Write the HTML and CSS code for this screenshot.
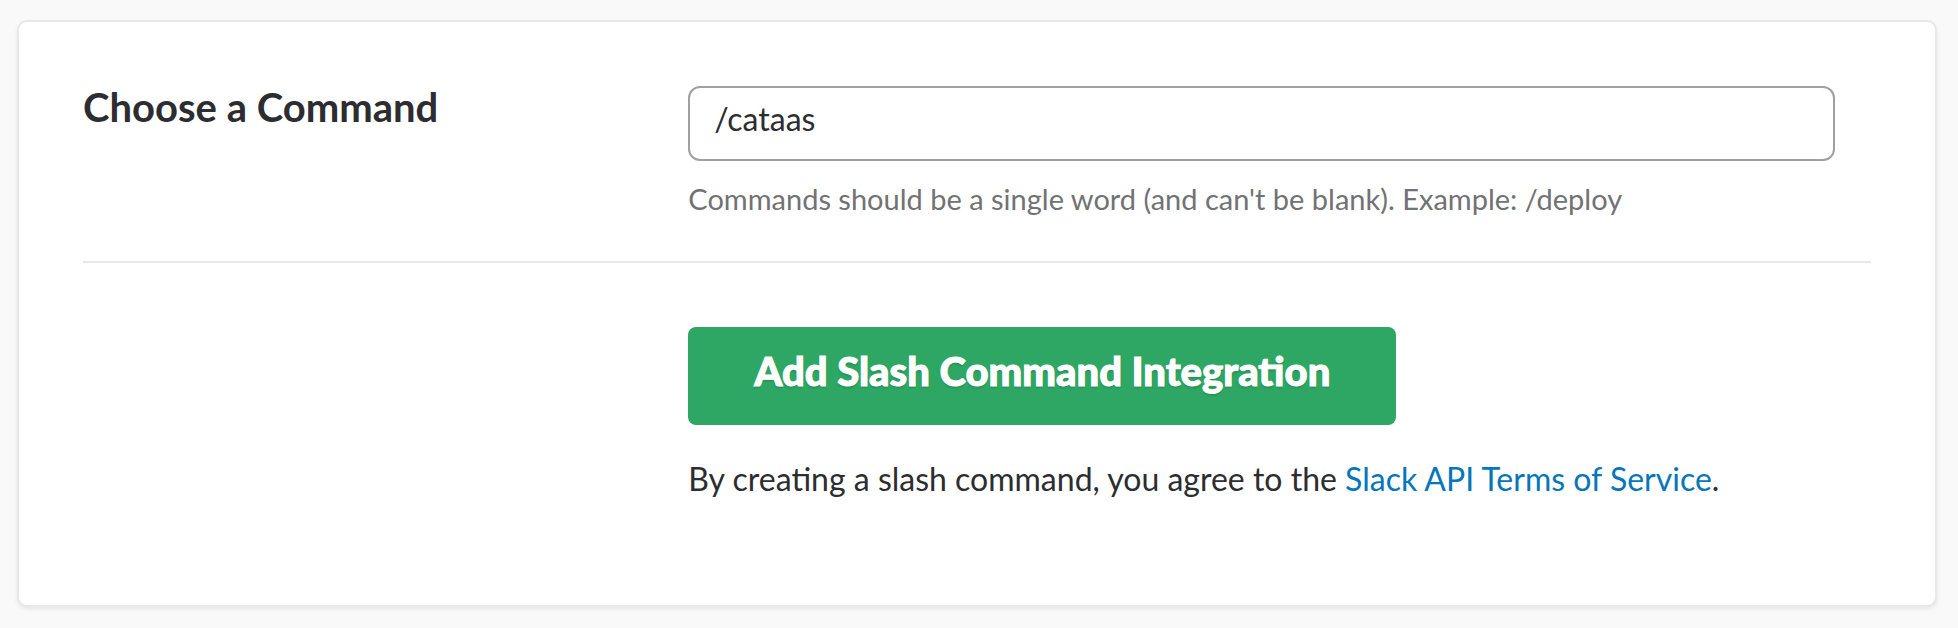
FILE: index.html
```html
<!DOCTYPE html>
<html lang="en">
<head>
<meta charset="utf-8">
<title>Slash Commands</title>
<link rel="stylesheet" href="styles.css">
</head>
<body>
<form class="card">
  <div class="row">
    <label class="heading" for="command">Choose a Command</label>
    <div class="field">
      <input class="input" id="command" type="text" value="/cataas" aria-describedby="hint">
      <p class="hint" id="hint">Commands should be a single word (and can't be blank). Example: /deploy</p>
    </div>
  </div>
  <div class="row actions">
    <div class="field">
      <button class="button" type="button">Add Slash Command Integration</button>
      <p class="terms">By creating a slash command, you agree to the <a class="link" href="#">Slack API Terms of Service</a>.</p>
    </div>
  </div>
</form>
</body>
</html>
```
FILE: styles.css
```css
* { box-sizing: border-box; }
body {
  margin: 0;
  padding: 20px 21px 20px 17px;
  background: #f9f9f9;
  color: #2c2d30;
  font-family: Lato, sans-serif;
  font-size: 32px;
  line-height: 44px;
}
.card {
  padding: 64px 64px 104px;
  border: 2px solid #e8e8e8;
  border-radius: 10px;
  background: #fff;
  box-shadow: 0 2px 4px rgba(0, 0, 0, 0.08);
}
.row {
  display: grid;
  grid-template-columns: 1fr 2fr;
  column-gap: 14px;
}
.heading {
  font-size: 40px;
  font-weight: 700;
  line-height: 42px;
}
.field { grid-column: 2; padding-right: 36px; }
.input {
  display: block;
  width: 100%;
  height: 75px;
  padding: 10px 24px 20px;
  border: 2px solid #a0a0a2;
  border-radius: 12px;
  background: #fff;
  color: inherit;
  font: inherit;
}
.hint {
  margin: 16px 0 40px;
  color: #717274;
  font-size: 29px;
}
.actions { padding-top: 64px; border-top: 2px solid #e8e8e8; }
.button {
  display: block;
  height: 98px;
  padding: 0 66px 10px;
  border: 0;
  border-radius: 8px;
  background: #2ea664;
  color: #fff;
  font: 900 40px Lato, sans-serif;
  -webkit-text-stroke: 1px #fff;
  text-shadow: 0 2px 2px rgba(0, 0, 0, 0.15);
}
.terms { margin: 32px 0 0; }
.link { color: #0576b9; text-decoration: none; }
```
